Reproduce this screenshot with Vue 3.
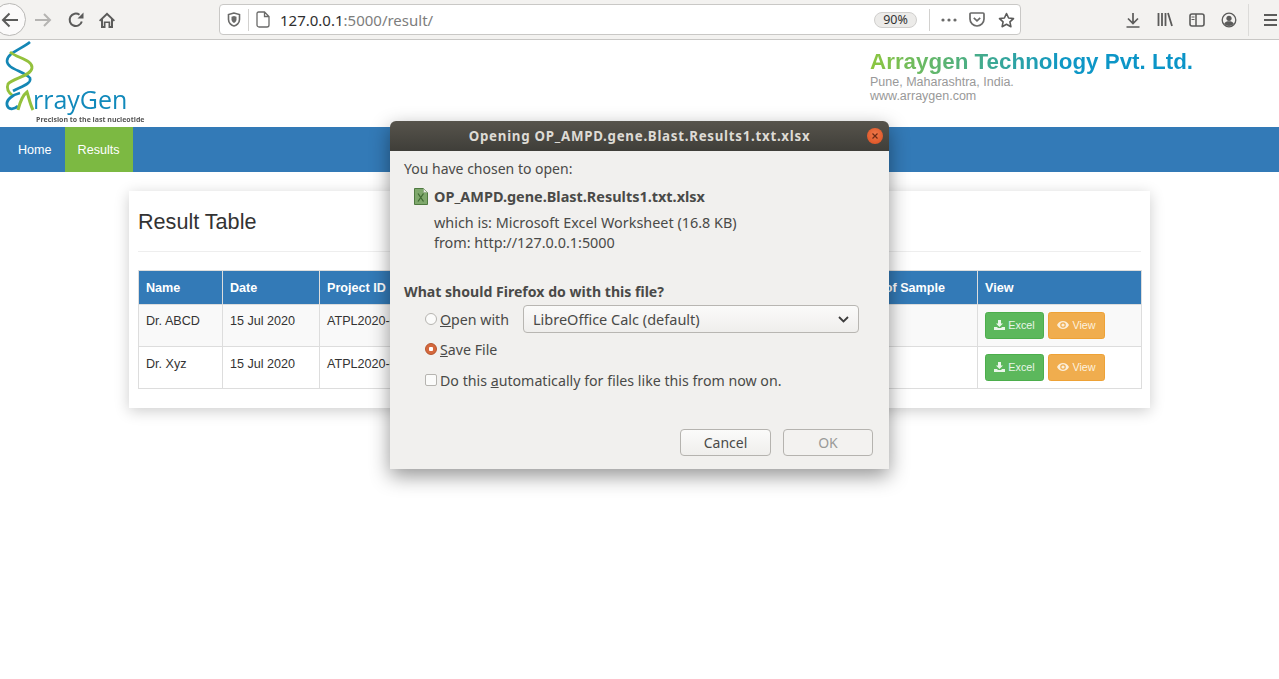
<template>
  <div class="page">
    <!-- browser chrome -->
    <div class="toolbar">
      <button class="back">
        <svg width="18" height="18" viewBox="0 0 18 18"><path d="M17 9H2M8.500 2.500 2 9l6.500 6.500" fill="none" stroke="#5b5b5a" stroke-width="2"/></svg>
      </button>
      <span class="tool fwd">
        <svg width="18" height="18" viewBox="0 0 18 18"><path d="M1 9h15M10 3l6 6-6 6" fill="none" stroke="#b5b4b2" stroke-width="2"/></svg>
      </span>
      <span class="tool reload">
        <svg width="18" height="18" viewBox="0 0 18 18"><path d="M14.800 10.500A6.200 6.200 0 1 1 12.500 3.800" fill="none" stroke="#5b5b5a" stroke-width="2"/><path d="M10.500 7.500h6v-6z" fill="#5b5b5a"/></svg>
      </span>
      <span class="tool home">
        <svg width="18" height="18" viewBox="0 0 18 18"><path d="M9 1.500 1 9.200l1.200 1.200L3 9.700V17h4.500v-5h3v5H15V9.700l.8.700L17 9.200zM5 15V8l4-3.800L13 8v7h-.800v-4.500H5.800V15z" fill="#5b5b5a"/></svg>
      </span>
      <div class="urlbar">
        <svg class="shield" width="14" height="15" viewBox="0 0 14 15"><path d="M7 1 1.500 2.500v5C1.500 11 4.500 13.500 7 14c2.500-.5 5.500-3 5.500-6.500v-5z" fill="none" stroke="#6a6a69" stroke-width="1.600"/><path d="M7 4 4.500 4.800v2.700C4.500 9.300 6 10.600 7 11c1-.4 2.500-1.700 2.500-3.500V4.800z" fill="#6a6a69"/></svg>
        <i class="sep"></i>
        <svg class="pageicon" width="14" height="17" viewBox="0 0 14 17"><path d="M2.500 1h6L13 5.500V14a2 2 0 0 1-2 2H3a2 2 0 0 1-2-2V2.500A1.500 1.500 0 0 1 2.500 1zM8.500 1v4.500H13" fill="none" stroke="#6a6a69" stroke-width="1.300"/></svg>
        <span class="url">127.0.0.1<span class="url-rest">:5000/result/</span></span>
        <span class="zoom">90%</span>
        <i class="sep sep2"></i>
        <svg class="dots" width="16" height="4" viewBox="0 0 16 4"><circle cx="2" cy="2" r="1.600" fill="#6a6a69"/><circle cx="8" cy="2" r="1.600" fill="#6a6a69"/><circle cx="14" cy="2" r="1.600" fill="#6a6a69"/></svg>
        <svg class="pocket" width="16" height="15" viewBox="0 0 16 15"><path d="M2 1h12a1 1 0 0 1 1 1v5a7 7 0 0 1-14 0V2a1 1 0 0 1 1-1z" fill="none" stroke="#6a6a69" stroke-width="1.700"/><path d="M4.800 5.800 8 8.800l3.200-3" fill="none" stroke="#6a6a69" stroke-width="1.700"/></svg>
        <svg class="star" width="17" height="16" viewBox="0 0 17 16"><path d="m8.500 1.500 2.100 4.500 4.900.6-3.600 3.300 1 4.800-4.400-2.400-4.400 2.400 1-4.800L1.500 6.600 6.400 6z" fill="none" stroke="#5b5b5a" stroke-width="1.600" stroke-linejoin="round"/></svg>
      </div>
      <div class="right-tools">
        <svg width="16" height="16" viewBox="0 0 16 16"><path d="M8 1v10M3 6.500 8 11.500l5-5M1.500 15h13" fill="none" stroke="#5b5b5a" stroke-width="1.700"/></svg>
        <svg width="16" height="15" viewBox="0 0 16 15"><path d="M1.500 1v13M5 1v13M8.500 1v13M11 1l4 13" fill="none" stroke="#5b5b5a" stroke-width="1.800"/></svg>
        <svg width="16" height="14" viewBox="0 0 16 14"><rect x="1" y="1" width="14" height="12" rx="2" fill="none" stroke="#5b5b5a" stroke-width="1.600"/><path d="M7 1v12" stroke="#5b5b5a" stroke-width="1.500"/><path d="M2.500 4h3M2.500 6.500h3" stroke="#5b5b5a"/></svg>
        <svg width="16" height="16" viewBox="0 0 16 16"><circle cx="8" cy="8" r="6.800" fill="none" stroke="#5b5b5a" stroke-width="1.300"/><circle cx="8" cy="6.300" r="2.600" fill="#5b5b5a"/><path d="M3.200 11.500c1-1.800 2.800-2.300 4.800-2.300s3.800.5 4.800 2.300C11.500 13.300 10 14 8 14s-3.500-.7-4.800-2.500z" fill="#5b5b5a"/></svg>
      </div>
      <i class="tool-sep"></i>
      <span class="burger"><i></i><i></i><i></i></span>
    </div>

    <!-- site header -->
    <header class="site-head">
      <svg class="logo" width="150" height="87" viewBox="0 0 150 87">
        <path d="M30 2 C22 9 7 13 7 21 C7 29 24 31 30 38 C32 44 20 47 13 51" fill="none" stroke="#1487b5" stroke-width="2.600"/>
        <path d="M10 12 C17 18 33 20 32 28 C31 36 13 38 8 44 C6 49 9 53 13 56" fill="none" stroke="#94c13d" stroke-width="2.800"/>
        <path d="M20 53 C12 55 6 60 7 65 C8 70 14 70 18 66" fill="none" stroke="#1487b5" stroke-width="2.800"/>
        <path d="M18 70 C20 62 23 55 27 52 C29 58 30 64 33 70" fill="none" stroke="#94c13d" stroke-width="3"/>
        <text x="33" y="69" class="logo-name">rrayGen</text>
        <text x="36" y="82" class="logo-tag">Precision to the last nucleotide</text>
      </svg>
      <div class="company">
        <h1>Arraygen Technology Pvt. Ltd.</h1>
        <p>Pune, Maharashtra, India.</p>
        <p>www.arraygen.com</p>
      </div>
    </header>

    <nav class="navbar">
      <a>Home</a>
      <a class="active">Results</a>
    </nav>

    <main class="content">
      <section class="card">
        <h2>Result Table</h2>
        <table>
          <colgroup>
            <col v-for="w in colWidths" :key="w.id" :style="{ width: w.px + 'px' }" />
          </colgroup>
          <thead>
            <tr>
              <th>Name</th><th>Date</th><th>Project ID</th><th>No. of Sample</th><th>View</th>
            </tr>
          </thead>
          <tbody>
            <tr v-for="row in rows" :key="row.name">
              <td>{{ row.name }}</td>
              <td>15 Jul 2020</td>
              <td>ATPL2020-01</td>
              <td></td>
              <td class="actions">
                <a class="btn green">
                  <svg width="11" height="10" viewBox="0 0 11 10"><path d="M4 0h3v3.500h2L5.500 7 2 3.500h2zM0 7h3l1 1h3l1-1h3v3H0z" fill="#eaf5ea"/></svg>
                  Excel
                </a>
                <a class="btn orange">
                  <svg width="12" height="8" viewBox="0 0 12 8"><path d="M6 0C3.500 0 1.300 1.500 0 4c1.300 2.500 3.500 4 6 4s4.700-1.500 6-4C10.700 1.500 8.500 0 6 0zm0 6.800A2.800 2.800 0 1 1 6 1.200a2.800 2.800 0 0 1 0 5.600zM6 2.400a1.600 1.600 0 1 0 0 3.200 1.600 1.600 0 0 0 0-3.200z" fill="#fbeed9"/></svg>
                  View
                </a>
              </td>
            </tr>
          </tbody>
        </table>
      </section>
    </main>

    <!-- firefox download dialog -->
    <div class="dialog">
      <div class="titlebar">
        <span>Opening OP_AMPD.gene.Blast.Results1.txt.xlsx</span>
        <b class="close">
          <svg width="8" height="8" viewBox="0 0 8 8"><path d="M1.500 1.500l5 5M6.500 1.500l-5 5" stroke="#6d2a14" stroke-width="1.200"/></svg>
        </b>
      </div>
      <div class="dialog-body">
        <p class="chosen">You have chosen to open:</p>
        <div class="filename">
          <svg width="14" height="17" viewBox="0 0 14 17">
            <path d="M.5.500h9l4 4v12H.5z" fill="#7fa86c" stroke="#4f7a40"/>
            <path d="M9.500.500v4h4z" fill="#e6ebe2" stroke="#8aa37e" stroke-width=".6"/>
            <path d="M4 5.500l5.500 8M9.500 5.500 4 13.500" stroke="#3f6a32" stroke-width="1.300"/>
          </svg>
          <strong>OP_AMPD.gene.Blast.Results1.txt.xlsx</strong>
        </div>
        <p class="meta">which is: Microsoft Excel Worksheet (16.8 KB)</p>
        <p class="meta">from: http://127.0.0.1:5000</p>

        <p class="question">What should Firefox do with this file?</p>

        <div class="option open-row">
          <i class="radio"></i>
          <span class="lbl"><u>O</u>pen with</span>
          <div class="select">
            <span>LibreOffice Calc (default)</span>
            <svg width="11" height="7" viewBox="0 0 11 7"><path d="M1 1l4.500 4.500L10 1" fill="none" stroke="#3d3d3d" stroke-width="1.800"/></svg>
          </div>
        </div>
        <div class="option save-row">
          <i class="radio on"></i>
          <span class="lbl"><u>S</u>ave File</span>
        </div>
        <div class="option auto-row">
          <i class="check"></i>
          <span class="lbl">Do this <u>a</u>utomatically for files like this from now on.</span>
        </div>

        <div class="dialog-actions">
          <button class="gtk-btn cancel">Cancel</button>
          <button class="gtk-btn ok">OK</button>
        </div>
      </div>
    </div>
  </div>
</template>

<script setup>
const colWidths = [
  { id: 'name', px: 84 },
  { id: 'date', px: 97 },
  { id: 'project', px: 534 },
  { id: 'samples', px: 124 },
  { id: 'view', px: 164 }
]

const rows = [
  { name: 'Dr. ABCD' },
  { name: 'Dr. Xyz' }
]
</script>

<style>
html, body { margin: 0; background: #fff; overflow: hidden; }
</style>

<style scoped>
.page {
  position: relative;
  width: 1279px;
  height: 679px;
  overflow: hidden;
  font-family: "Liberation Sans", Arial, sans-serif;
  font-size: 12.6px;
  color: #333;
  background: #fff;
}

/* browser chrome */
.toolbar {
  height: 39px;
  display: flex;
  align-items: center;
  background: #f3f2f0;
  border-bottom: 1px solid #c8c7c5;
}
.back {
  width: 33px;
  height: 33px;
  margin-left: -7px;
  padding: 0 0 0 1px;
  flex: none;
  display: flex;
  align-items: center;
  justify-content: center;
  border: 1px solid #b9b8b6;
  border-radius: 50%;
  background: #fbfafa;
}
.tool { display: flex; flex: none; }
.fwd { margin-left: 8px; }
.reload { margin-left: 15px; }
.home { margin-left: 13px; }
.urlbar {
  width: 802px;
  height: 31px;
  box-sizing: border-box;
  margin-left: 103px;
  flex: none;
  display: flex;
  align-items: center;
  background: #fff;
  border: 1px solid #c9c8c6;
  border-radius: 4px;
}
.shield { margin-left: 7px; flex: none; }
.sep { width: 1px; height: 22px; background: #d2d1cf; flex: none; margin-left: 7px; }
.pageicon { margin-left: 7px; flex: none; }
.url {
  margin-left: 10px;
  font-family: "Noto Sans", sans-serif;
  font-size: 15px;
  color: #2f2f2f;
  white-space: nowrap;
}
.url-rest { color: #7d7d7d; }
.zoom {
  margin-left: auto;
  width: 43px;
  height: 16px;
  box-sizing: border-box;
  border: 1px solid #d0cfcd;
  border-radius: 8px;
  background: #ecebe9;
  font-family: "Noto Sans", sans-serif;
  font-size: 12.500px;
  line-height: 14px;
  text-align: center;
  color: #333;
}
.sep2 { margin-left: 12px; }
.dots { margin-left: 11px; }
.pocket { margin-left: 12px; }
.star { margin-left: 13px; margin-right: 5px; }
.right-tools {
  margin-left: 104px;
  display: flex;
  align-items: center;
  gap: 16px;
  flex: none;
}
.tool-sep { width: 1px; height: 32px; background: #dcdbd9; margin-left: 11px; flex: none; }
.burger { margin-left: 15px; width: 13px; display: flex; flex-direction: column; gap: 3px; flex: none; }
.burger i { height: 2px; background: #5b5b5a; }

/* site header */
.site-head {
  height: 87px;
  display: flex;
  justify-content: space-between;
}
.logo { display: block; flex: none; filter: blur(0.35px); }
.logo-name {
  font-family: "Open Sans", sans-serif;
  font-size: 25px;
  fill: #1189bb;
}
.logo-tag {
  font-family: "Open Sans", sans-serif;
  font-size: 7px;
  font-weight: 700;
  fill: #555;
}
.company { width: 409px; padding-top: 9px; box-sizing: border-box; }
.company h1 {
  margin: 0;
  width: max-content;
  font-size: 22.400px;
  line-height: 26px;
  font-weight: 700;
  background: linear-gradient(90deg, #8cc63f 0%, #0e97c6 60%, #0a94c8 100%);
  -webkit-background-clip: text;
  background-clip: text;
  color: transparent;
}
.company p { margin: 0; color: #999; line-height: 14px; font-size: 12.500px; }

.navbar {
  height: 45px;
  display: flex;
  background: #337ab7;
}
.navbar a {
  display: flex;
  align-items: center;
  padding: 0 13px 0 18px;
  color: #fff;
}
.navbar a.active { background: #7cb942; padding: 0 13px; }

.content { padding: 19px 129px 0; }
.card {
  width: 1021px;
  height: 217px;
  box-sizing: border-box;
  padding: 0 9px;
  background: #fff;
  box-shadow: 0 3px 14px rgba(0, 0, 0, 0.2);
}
.card h2 {
  margin: 0;
  padding: 18px 0 16px;
  height: 61px;
  box-sizing: border-box;
  font-size: 21.600px;
  line-height: 26px;
  font-weight: 400;
  border-bottom: 1px solid #eee;
}
table {
  margin-top: 18px;
  width: 1003px;
  table-layout: fixed;
  border-collapse: collapse;
  border: 1px solid #ddd;
}
th {
  height: 33px;
  padding: 0 7px;
  text-align: left;
  font-weight: 700;
  color: #fff;
  background: #337ab7;
  border: 1px solid #ddd;
  white-space: nowrap;
}
td {
  height: 42px;
  padding: 7px 7px;
  box-sizing: border-box;
  vertical-align: top;
  line-height: 18px;
  border: 1px solid #ddd;
  white-space: nowrap;
}
tbody tr:nth-child(odd) td { background: #f9f9f9; }
tbody tr:nth-child(even) td { padding-top: 8px; }
tbody tr td.actions { padding: 7px 7px 0; }
.btn {
  display: inline-flex;
  align-items: center;
  justify-content: center;
  gap: 3px;
  height: 27px;
  padding-bottom: 1px;
  box-sizing: border-box;
  border-radius: 2.700px;
  font-size: 10.800px;
  vertical-align: top;
}
.green { width: 59px; background: #5cb85c; border: 1px solid #4cae4c; color: #e9f5e9; }
.orange { width: 57px; margin-left: 4px; background: #f0ad4e; border: 1px solid #eea236; color: #fdf1df; }

/* dialog */
.dialog {
  position: absolute;
  left: 390px;
  top: 121px;
  width: 499px;
  height: 348px;
  border-radius: 6px 6px 0 0;
  background: #f1f0ee;
  box-shadow: 0 7px 20px rgba(0, 0, 0, 0.42);
  font-family: "Noto Sans", sans-serif;
  font-size: 14px;
  color: #4a4a48;
}
.titlebar {
  position: relative;
  height: 30px;
  display: flex;
  align-items: center;
  justify-content: center;
  border-radius: 6px 6px 0 0;
  background: linear-gradient(#57544c, #3f3e39);
  color: #dedbd5;
  font-weight: 700;
  font-size: 13.300px;
  letter-spacing: 0.73px;
}
.close {
  position: absolute;
  right: 6px;
  top: 7px;
  width: 16px;
  height: 16px;
  display: flex;
  align-items: center;
  justify-content: center;
  border-radius: 50%;
  background: radial-gradient(circle at 50% 40%, #f0794a, #d94d1f);
}
.dialog-body { padding: 8px 16px 0 14px; position: relative; height: 318px; box-sizing: border-box; }
.dialog-body p { margin: 0; }
.chosen { line-height: 20px; }
.filename {
  margin: 7px 0 0 10px;
  display: flex;
  align-items: center;
  gap: 6px;
  height: 20px;
}
.filename strong { font-weight: 700; font-size: 14.450px; }
.dialog-body .meta { margin-left: 30px; line-height: 20px; font-size: 14.400px; }
.dialog-body .filename + .meta { margin-top: 7px; }
.dialog-body .question { margin-top: 29px; font-weight: 700; font-size: 14.100px; line-height: 20px; }
.option { display: flex; align-items: center; margin-left: 21px; }
.open-row { margin-top: 3px; height: 28px; }
.save-row { margin-top: 2px; height: 28px; }
.auto-row { margin-top: 3px; height: 28px; }
.lbl { margin-left: 3px; white-space: nowrap; font-size: 14.200px; }
.radio, .check {
  width: 12px;
  height: 12px;
  box-sizing: border-box;
  border: 1px solid #b6b4b0;
  background: #fbfbfa;
  flex: none;
}
.radio { border-radius: 50%; }
.radio.on {
  border: 1px solid #b5532a;
  background: radial-gradient(circle, #fff 0 2px, #d5683d 2.500px);
}
.check { border-radius: 2px; }
.select {
  margin-left: 14px;
  width: 336px;
  height: 28px;
  box-sizing: border-box;
  padding: 0 9px;
  display: flex;
  align-items: center;
  justify-content: space-between;
  border: 1px solid #b8b6b2;
  border-radius: 4px;
  background: linear-gradient(#fbfbfa, #efeeec);
  font-size: 14.500px;
}
.dialog-actions {
  position: absolute;
  right: 16px;
  top: 278px;
  display: flex;
  gap: 12px;
}
.gtk-btn {
  height: 27px;
  padding: 0;
  border: 1px solid #b5b3af;
  border-radius: 4px;
  background: linear-gradient(#fbfbfa, #efeeec);
  font-family: inherit;
  font-size: 14px;
  color: #4a4a48;
}
.cancel { width: 91px; }
.ok { width: 90px; color: #9a9a98; background: #f3f2f0; }
</style>
